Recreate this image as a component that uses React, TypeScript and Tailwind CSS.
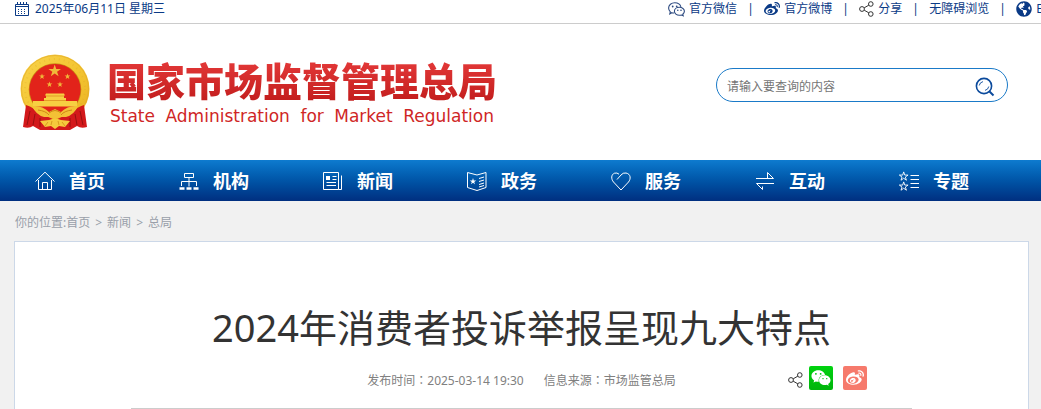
import React from 'react';
import { FaGlobeAmericas, FaWeibo, FaWeixin } from 'react-icons/fa';

// ─── Icons ─────────────────────────────────────────────────────

function CalendarIcon() {
  return (
    <svg width="14" height="14" viewBox="0 0 14 14" fill="none" stroke="#0a3a86" className="flex-shrink-0">
      <path d="M.5 2.5h13v11H.5zM.5 4.5h13" />
      <path d="M2.5 0v3M5.5 0v3M8.5 0v3M11.5 0v3" />
      <path d="M3 7.5h9M3 9.5h9M3 11.5h9" strokeDasharray="1 2" />
    </svg>
  );
}

function WechatIcon() {
  return (
    <svg width="17" height="16" viewBox="0 0 17 16" fill="none" stroke="#2d4a80" strokeWidth="1.1" className="flex-shrink-0">
      <path d="M6 12c-.8 0-1.500-.1-2.200-.3L1.800 12.800l.5-2C1.200 9.800.6 8.500.6 7.100.6 4.100 3.400 1.700 6.800 1.700c3 0 5.500 1.700 6.100 4.100" />
      <path d="M11.400 6.300c2.800 0 5 1.800 5 4 0 1.200-.6 2.200-1.600 3l.4 1.500-1.700-.8c-.7.200-1.400.3-2.100.3-2.800 0-5-1.800-5-4s2.200-4 5-4z" />
      <g fill="#2d4a80" stroke="none">
        <circle cx="4.700" cy="5.500" r=".9" />
        <circle cx="8.700" cy="5.300" r=".9" />
        <circle cx="9.800" cy="9.300" r=".8" />
        <circle cx="13" cy="9.300" r=".8" />
      </g>
    </svg>
  );
}

function ShareIcon({ className = '' }: { className?: string }) {
  return (
    <svg width="15" height="16" viewBox="0 0 15 16" fill="none" stroke="#333" className={`flex-shrink-0 ${className}`}>
      <circle cx="3" cy="8" r="2.4" />
      <circle cx="11.8" cy="3" r="2.3" />
      <circle cx="11.8" cy="13" r="2.3" />
      <path d="M5.2 6.8l4.6-2.6M5.2 9.2l4.6 2.6" />
    </svg>
  );
}

function SearchIcon() {
  return (
    <svg width="20" height="20" viewBox="0 0 20 20" fill="none" stroke="#0b4a9c">
      <circle cx="9" cy="9" r="7.6" strokeWidth="1.6" />
      <path d="M14.500 14.500l4 4" strokeWidth="2" />
      <path d="M4.200 8.500A5 5 0 0 1 8 4.600M13.800 9.500A5 5 0 0 1 10 13.400" strokeWidth=".9" />
    </svg>
  );
}

const STAR = 'M0-1L.23-.31.95-.31.36.12.59.81 0 .38-.59.81-.36.12-.95-.31-.23-.31z';

function Emblem() {
  return (
    <svg width="70" height="76" viewBox="0 0 70 76" className="flex-shrink-0">
      <defs>
        <linearGradient id="gold" x1="0" y1="0" x2="1" y2="1">
          <stop offset="0" stopColor="#f8d34c" />
          <stop offset=".5" stopColor="#f4c632" />
          <stop offset="1" stopColor="#eab022" />
        </linearGradient>
      </defs>
      <circle cx="35" cy="35" r="34.5" fill="url(#gold)" />
      <circle cx="35" cy="35" r="33.500" fill="none" stroke="#e0a62a" strokeWidth="1" opacity=".6" />
      <circle cx="35" cy="35" r="30" fill="none" stroke="#dfa424" strokeWidth="2" strokeDasharray="1 4" opacity=".3" />
      <circle cx="35" cy="35.500" r="26.300" fill="#c98e14" />
      <circle cx="35" cy="35.500" r="25.600" fill="#e2231a" />
      <g fill="#f0b93a">
        <path d={STAR} transform="translate(34.7 17) scale(6.6)" />
        <path d={STAR} transform="translate(22 22.5) scale(3.1)" />
        <path d={STAR} transform="translate(47.5 22.5) scale(3.1)" />
        <path d={STAR} transform="translate(29.5 30.5) scale(3.1)" />
        <path d={STAR} transform="translate(40 30.5) scale(3.1)" />
      </g>
      <path d="M26 39.500h18l1 2h-1v2.500h2v3h11v5.500H13V47h11v-3h2v-2.500h-1z" fill="#f7cf42" />
      <path d="M26 42h18M24 46.500h22" stroke="#d9851b" strokeWidth=".7" />
      <path d="M6 51q7 2 11 7l18 8 18-8q4-5 11-7l3 22q-6 2-10-1l-7 4H20l-7-4q-4 3-10 1z" fill="#d3191b" />
      <path d="M10 57L7 71M15 60l-2 11M20 64v9M60 57l3 14M55 60l2 11M50 64v9" stroke="#98100f" strokeWidth="1" />
      <path d="M12 52q10-1 17 6l6-3 6 3q7-7 17-6-4 9-12 11h-6l-5 2-5-2h-6q-8-2-12-11z" fill="#f3c135" />
      <path d="M29 59q6-5 12 0M18 56q8 1 11 5M52 56q-8 1-11 5" fill="none" stroke="#cf8a16" />
      <path d="M20 67l9-1q6-3 12 0l9 1-5 6-6-1-4 3-4-3-6 1z" fill="#f5c93c" />
      <path d="M28 68l-3 4M32 67l-1 4M38 67l1 4M42 68l3 4" stroke="#d18e18" strokeWidth=".8" />
    </svg>
  );
}

const NAV_ITEMS: { label: string; icon: React.ReactNode }[] = [
  {
    label: '首页',
    icon: <path d="M.5 10.500L10 1.200l9.500 9.300M3.500 9v9.500h13V9M7.500 18.500v-7h5v7" />,
  },
  {
    label: '机构',
    icon: (
      <>
        <path d="M5.500 2.500h9v4h-9zM10 6.500v9M2.500 15v-4.500h15V15" />
        <path d="M.5 17.500h5M7.500 17.500h5M14.500 17.500h5" strokeWidth="2.5" />
      </>
    ),
  },
  {
    label: '新闻',
    icon: (
      <>
        <path d="M.5 1.500h15v17H.5zM18.500 4.500v14h-3M9.500 5.500h4M9.500 8.500h4M3.500 11.500h9.500M3.500 14.500h9.500" />
        <path d="M3 5h4v4H3z" fill="#fff" stroke="none" />
      </>
    ),
  },
  {
    label: '政务',
    icon: (
      <>
        <path d="M.5 1.500L10 4l9-2.500v15L10 19.500.5 16.500z" />
        <path d="M12 7.500l5-1.500M12 10.500l5-1.500M12 13.500l5-1.500M12 16l5-1.500" />
        <path d={STAR} transform="translate(6 10.5) scale(3.4)" fill="#fff" stroke="none" />
      </>
    ),
  },
  {
    label: '服务',
    icon: (
      <path d="M6 8.500l4-4.500q2-2.500 5-2c5 1 5 6 2.500 9L10 19 2.500 11C0 8 0 3.500 3.500 2.200q2.500-.8 4.500 1" />
    ),
  },
  {
    label: '互动',
    icon: <path d="M1 7.500h17.500l-6-6v6M19 12.500H1.500l6 6v-3" />,
  },
  {
    label: '专题',
    icon: (
      <>
        <path d={STAR} transform="translate(4.7 5.5) scale(4.6)" strokeWidth=".2" />
        <path d={STAR} transform="translate(4.7 15.5) scale(4.6)" strokeWidth=".2" />
        <path d="M11.500 4.500H20M11.500 8.500H20M11.500 12.500H20M11.500 16.500H20" />
      </>
    ),
  },
];

// ─── Top bar ───────────────────────────────────────────────────

function Divider() {
  return (
    <span aria-hidden="true" className="w-[7px] text-center">
      |
    </span>
  );
}

function TopBar() {
  return (
    <div className="flex items-start justify-between overflow-hidden whitespace-nowrap border-b border-[#ccc] bg-white pb-[5px] pl-[15px] text-xs leading-[18px] text-[#0a3a86]">
      <div className="flex items-center gap-1.5">
        <CalendarIcon />
        <span>2025年06月11日 星期三</span>
      </div>
      <div className="-mr-9 flex items-center gap-2.5">
        <a href="#wechat" className="flex items-center gap-1">
          <WechatIcon />
          官方微信
        </a>
        <Divider />
        <a href="#weibo" className="flex items-center gap-1">
          <FaWeibo size={16} />
          官方微博
        </a>
        <Divider />
        <a href="#share" className="flex items-center gap-1">
          <ShareIcon />
          分享
        </a>
        <Divider />
        <a href="#accessible">无障碍浏览</a>
        <Divider />
        <a href="#english" className="flex items-center gap-1">
          <FaGlobeAmericas size={16} />
          English
        </a>
      </div>
    </div>
  );
}

// ─── Header ────────────────────────────────────────────────────

function Header() {
  return (
    <header className="flex items-start justify-between bg-white py-[30px] pl-5 pr-[33px]">
      <a href="#home" className="flex items-center gap-[17px] whitespace-nowrap">
        <Emblem />
        <div>
          <div className="bg-gradient-to-b from-[#e63a3a] to-[#c01a1a] bg-clip-text text-[39px] font-black leading-[48px] text-transparent">
            国家市场监督管理总局
          </div>
          <div className="flex justify-between px-[3px] font-['DejaVu_Sans',sans-serif] text-[17px] leading-[22px] text-[#cf2626]">
            <span>State</span>
            <span>Administration</span>
            <span>for</span>
            <span>Market</span>
            <span>Regulation</span>
          </div>
        </div>
      </a>
      <form
        className="mt-[14px] flex h-[34px] w-[292px] items-center rounded-full border border-[#1a7ac8] pl-2.5 pr-3"
        onSubmit={(e) => e.preventDefault()}
      >
        <input
          type="text"
          aria-label="请输入要查询的内容"
          placeholder="请输入要查询的内容"
          className="min-w-0 flex-1 bg-transparent pt-1 text-xs outline-none placeholder:text-[#757575]"
        />
        <button type="submit" aria-label="搜索" className="pt-1">
          <SearchIcon />
        </button>
      </form>
    </header>
  );
}

function MainNav() {
  return (
    <nav className="grid grid-cols-7 bg-gradient-to-b from-[#0e7bcf] to-[#002f80] pl-[15px] pr-[18px]">
      {NAV_ITEMS.map((item) => (
        <a
          key={item.label}
          href={`#${item.label}`}
          className="flex items-center gap-[14px] whitespace-nowrap pl-5 pt-px text-lg font-bold leading-10 text-white"
        >
          <svg width="20" height="20" viewBox="0 0 20 20" fill="none" stroke="#fff" className="flex-shrink-0">
            {item.icon}
          </svg>
          {item.label}
        </a>
      ))}
    </nav>
  );
}

// ─── Article ───────────────────────────────────────────────────

function Breadcrumb() {
  return (
    <div className="px-[15px] pb-2 pt-3 text-xs leading-5 text-[#999fa9]">
      你的位置:<a href="#home">首页</a>
      <span className="mx-[5px]">&gt;</span>
      <a href="#news">新闻</a>
      <span className="mx-[5px]">&gt;</span>
      <a href="#office">总局</a>
    </div>
  );
}

// Full-width colon centred in its box
function Colon() {
  return <span className="font-['Noto_Sans_CJK_TC',sans-serif]">：</span>;
}

function Article() {
  return (
    <article className="ml-[14px] mr-3 flex-1 border border-b-0 border-[#ccd8e8] bg-white px-[116px] pt-[58px]">
      <h1 className="whitespace-nowrap text-center text-[38px] leading-[54px] text-[#333]">
        2024年消费者投诉举报呈现九大特点
      </h1>
      <div className="grid grid-cols-[1fr_auto_1fr] items-center border-b border-[#ccc] pb-[18px] pt-3">
        <div className="col-start-2 flex gap-5 whitespace-nowrap pt-1 text-xs text-[#808080]">
          <span>
            发布时间
            <Colon />
            2025-03-14 19:30
          </span>
          <span>
            信息来源
            <Colon />
            市场监管总局
          </span>
        </div>
        <div className="flex items-center justify-end gap-2.5 pr-[45px]">
          <ShareIcon className="mt-1" />
          <button
            type="button"
            aria-label="微信"
            className="-ml-1 flex size-6 items-center justify-center rounded-[2px] bg-gradient-to-b from-[#00d30f] to-[#00b40c] text-white"
          >
            <FaWeixin size={20} />
          </button>
          <button
            type="button"
            aria-label="微博"
            className="flex size-6 items-center justify-center rounded-[2px] bg-[#f67a6c] text-white"
          >
            <FaWeibo size={18} />
          </button>
        </div>
      </div>
    </article>
  );
}

export default function App() {
  return (
    <div className="flex min-h-screen flex-col bg-[#f1f1f1] font-['Noto_Sans','Noto_Sans_CJK_SC',sans-serif]">
      <TopBar />
      <Header />
      <MainNav />
      <Breadcrumb />
      <Article />
    </div>
  );
}
